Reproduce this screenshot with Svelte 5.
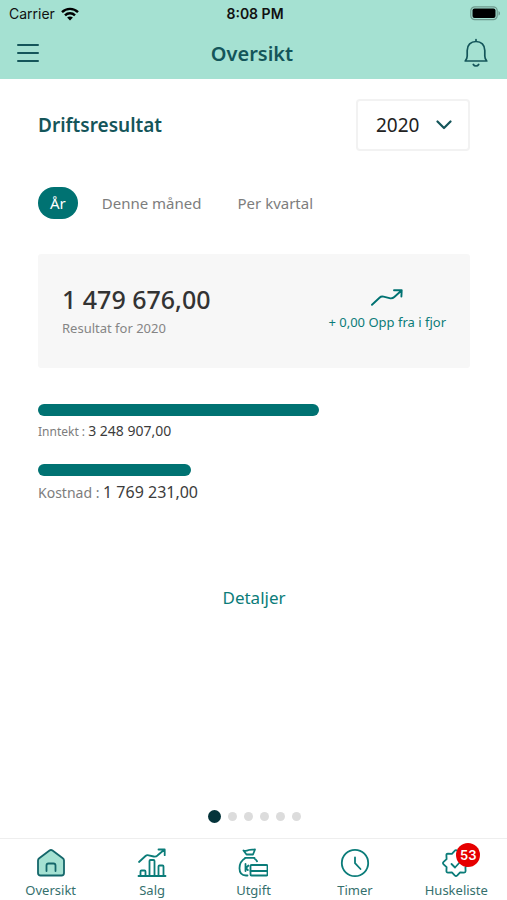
<script>
  let year = $state('2020');
  let period = $state('År');
  let page = $state(0);

  const periods = ['År', 'Denne måned', 'Per kvartal'];
  const bars = [
    { label: 'Inntekt', value: '3 248 907,00', share: 65, size: 'small' },
    { label: 'Kostnad', value: '1 769 231,00', share: 35.4, size: 'large' }
  ];
  const tabs = ['Oversikt', 'Salg', 'Utgift', 'Timer', 'Huskeliste'];
</script>

<div class="app">
  <header>
    <div class="status">
      <span class="carrier">
        Carrier
        <svg width="18" height="14" viewBox="0 0 18 14" aria-hidden="true">
          <g fill="none" stroke="#000" stroke-width="2.4">
            <path d="M1 5.2C5.5.7 12.500.7 17 5.200" />
            <path d="M4 8.300C6.800 5.500 11.200 5.500 14 8.300" />
          </g>
          <path d="M9 13.400 6.100 10.500C7.700 9 10.300 9 11.900 10.500Z" />
        </svg>
      </span>
      <span class="clock">8:08 PM</span>
      <svg class="battery" width="31" height="15" viewBox="0 0 31 15" aria-hidden="true">
        <rect x=".8" y=".8" width="26.400" height="12.900" rx="4" fill="none" stroke="#6d998d" stroke-width="1.200" />
        <rect x="2.500" y="2.600" width="23" height="9.300" rx="2" />
        <path d="M28.500 5v4.600c2-.8 2-3.800 0-4.600z" fill="#6d998d" />
      </svg>
    </div>
    <div class="bar">
      <button aria-label="Meny">
        <svg width="24" height="24" viewBox="0 0 24 24" fill="none" stroke="#14555a" stroke-width="2" stroke-linecap="round">
          <path d="M2 4h20M2 12h20M2 20h20" />
        </svg>
      </button>
      <h1>Oversikt</h1>
      <button aria-label="Varsler">
        <svg width="24" height="30" viewBox="0 0 24 30" fill="none" stroke="#14555a" stroke-width="1.700" stroke-linecap="round" stroke-linejoin="round">
          <path d="M12 1.500v2M1.200 23h21.600c-1.700-1.600-2-3-2-5V12.500C20.800 7 17.200 3.500 12 3.500S3.200 7 3.200 12.500V18c0 2-.3 3.400-2 5z" />
          <path d="M9.300 26.500c1.200 2 4.200 2 5.400 0" />
        </svg>
      </button>
    </div>
  </header>

  <main>
    <div class="heading">
      <h2>Driftsresultat</h2>
      <label class="year">
        <select bind:value={year} aria-label="År">
          <option>2020</option>
          <option>2019</option>
        </select>
        <svg width="16" height="10" viewBox="0 0 16 10" fill="none" stroke="#14555a" stroke-width="2.200" stroke-linecap="round" stroke-linejoin="round" aria-hidden="true">
          <path d="M1.500 1.500 8 8l6.500-6.500" />
        </svg>
      </label>
    </div>

    <div class="periods">
      {#each periods as name}
        <button class:active={period === name} aria-pressed={period === name} onclick={() => (period = name)}>{name}</button>
      {/each}
    </div>

    <section class="card">
      <div>
        <p class="total">1 479 676,00</p>
        <p class="note">Resultat for 2020</p>
      </div>
      <div class="trend">
        <svg width="32" height="17" viewBox="0 0 32 17" fill="none" stroke="#007272" stroke-width="1.900" stroke-linecap="round" stroke-linejoin="round" aria-hidden="true">
          <path d="M1 15.800 8.500 8.700c1.300-1.200 2.500-1.400 4-1l6 1.500c2 .5 3.500 0 4.800-1.200L30.500 1.500M23 1.200l7.700.1-.3 6.200" />
        </svg>
        <p>+ 0,00 Opp fra i fjor</p>
      </div>
    </section>

    <section class="bars">
      {#each bars as bar}
        <div>
          <div class="fill" style:width="{bar.share}%"></div>
          <p class={bar.size}>{bar.label} : <b>{bar.value}</b></p>
        </div>
      {/each}
    </section>

    <a class="details" href="#detaljer">Detaljer</a>

    <div class="dots">
      {#each Array(6) as _, i}
        <button class:current={page === i} aria-label="Side {i + 1}" onclick={() => (page = i)}></button>
      {/each}
    </div>
  </main>

  <nav>
    {#each tabs as tab}
      <a href="#{tab.toLowerCase()}">
        <span class="icon">
          <svg width="30" height="30" viewBox="0 0 30 30" fill="none" stroke="#0b7c79" stroke-width="1.800" stroke-linecap="round" stroke-linejoin="round" aria-hidden="true">
            {#if tab === 'Oversikt'}
              <path fill="#a5e1d2" stroke="#14666a" d="M2 12.500c0-1 .4-1.700 1.200-2.300L13.500 2.500c1-.7 2-.7 3 0l10.300 7.700c.8.6 1.200 1.300 1.200 2.300V25c0 1.600-.9 2.500-2.500 2.500h-21C2.900 27.500 2 26.600 2 25z" />
              <path stroke="#14666a" d="M10.500 23v-5.500c0-1.200.8-2 2-2h5c1.200 0 2 .8 2 2V23" />
            {:else if tab === 'Salg'}
              <path d="M1.500 28h27M3.500 28v-4.500q0-1 1-1h3q1 0 1 1V28M12.500 28V13q0-1 1-1h3q1 0 1 1v15M21.500 28v-9.500q0-1 1-1h3q1 0 1 1V28" />
              <path d="M2 14l6.500-6c1-.9 2-1 3.200-.7l5 1.200c1.700.4 2.800 0 4-1.200L27.500 1.500M21.500 1.500h6.200v5.700" />
            {:else if tab === 'Utgift'}
              <path d="M5.500 2.500c2.200.8 3.800.2 5.300-.5 1.800-.8 3.800-.3 6.200-.5L15 6.500H8.500zM7 9.800h9.500M7.500 10C3.300 12.300 1.500 16.500 1.500 20.300c0 4.700 2.500 7.200 6.500 7.200h1.500M16 10c1.300.9 2.300 2 3 3.300M7.500 16v7M10.500 17.500l-2.700 2.500 2 2" />
              <rect x="12.500" y="17" width="17" height="10.500" rx="1" />
              <path d="M12.500 23h17" />
            {:else if tab === 'Timer'}
              <circle cx="15" cy="15" r="13.200" />
              <path d="M15 9.500v5.700l5.500 5.800" />
            {:else}
              <path d="M15 2.100q.8 0 1.300.7l2.800 3 4-.2q1.500 0 1.500 1.500l-.2 4 3 2.800q1.300 1.200 0 2.400l-3 2.800.2 4q0 1.500-1.500 1.500l-4-.2-2.800 3q-1.300 1.300-2.600 0l-2.800-3-4 .2q-1.500 0-1.500-1.500l.2-4-3-2.800q-1.300-1.200 0-2.400l3-2.800-.2-4q0-1.500 1.500-1.500l4 .2 2.800-3q.5-.7 1.300-.7z" />
              <path d="M10.500 16l3.500 3.500 5.500-6" />
            {/if}
          </svg>
          {#if tab === 'Huskeliste'}<span class="badge">53</span>{/if}
        </span>
        {tab}
      </a>
    {/each}
  </nav>
</div>

<style>
  :global(body) {
    background: #fff;
  }
  .app {
    display: flex;
    flex-direction: column;
    min-height: 100vh;
    font-family: "Noto Sans", sans-serif;
    color: #333;
  }
  h1, h2, p {
    margin: 0;
  }
  button {
    padding: 0;
    border: 0;
    background: none;
    font: inherit;
    color: inherit;
    cursor: pointer;
  }
  a {
    text-decoration: none;
  }
  svg {
    display: block;
    flex: none;
  }
  header {
    background: #a5e1d2;
  }
  .status {
    display: grid;
    grid-template-columns: 1fr auto 1fr;
    align-items: center;
    height: 27px;
    padding: 0 6px 0 9px;
    font: 14px/27px Inter, sans-serif;
    color: #111;
  }
  .carrier {
    display: flex;
    align-items: center;
    gap: 6px;
  }
  .clock {
    font-weight: 600;
  }
  .battery {
    justify-self: end;
  }
  .bar {
    display: flex;
    align-items: center;
    justify-content: space-between;
    height: 52px;
    padding: 0 19px 0 16px;
    color: #14555a;
  }
  h1 {
    font-size: 20px;
    font-weight: 600;
  }
  main {
    flex: 1;
    display: flex;
    flex-direction: column;
    padding: 20px 37px 15px 38px;
  }
  .heading {
    display: flex;
    align-items: center;
    justify-content: space-between;
  }
  h2 {
    font-size: 19px;
    font-weight: 600;
    color: #14555a;
  }
  .year {
    display: grid;
    align-items: center;
    width: 114px;
  }
  .year > * {
    grid-area: 1 / 1;
  }
  .year svg {
    justify-self: end;
    margin-right: 18px;
    pointer-events: none;
  }
  select {
    appearance: none;
    height: 52px;
    padding: 0 18px;
    border: 2px solid #f2f2f2;
    border-radius: 4px;
    background: #fff;
    font: 19px "Noto Sans", sans-serif;
    color: #222;
  }
  .periods {
    display: flex;
    gap: 12px;
    margin-top: 36px;
  }
  .periods button {
    height: 32px;
    padding: 0 12px;
    border-radius: 16px;
    font-size: 15px;
    color: #7d7d7d;
  }
  .periods .active {
    background: #007272;
    color: #fff;
  }
  .card {
    display: flex;
    align-items: center;
    justify-content: space-between;
    height: 114px;
    margin-top: 35px;
    padding: 0 24px;
    border-radius: 3px;
    background: #f7f7f7;
  }
  .total {
    font-size: 25px;
    line-height: 34px;
    font-weight: 500;
  }
  .note {
    font-size: 13px;
    line-height: 24px;
    color: #858585;
  }
  .trend {
    display: flex;
    flex-direction: column;
    align-items: center;
    gap: 4px;
    font-size: 13px;
    line-height: 24px;
    color: #0b7c79;
  }
  .bars {
    display: grid;
    gap: 20px;
    margin-top: 36px;
  }
  .fill {
    height: 12px;
    border-radius: 6px;
    background: #007272;
  }
  .bars p {
    padding-top: 3px;
    color: #7d7d7d;
  }
  .bars b {
    font-weight: 400;
    color: #3c3c3c;
  }
  .small {
    font-size: 12px;
    line-height: 24px;
  }
  .small b {
    font-size: 14px;
  }
  .large {
    font-size: 14px;
    line-height: 26px;
  }
  .large b {
    font-size: 16px;
  }
  .details {
    align-self: center;
    margin-top: 80px;
    font-size: 17px;
    line-height: 24px;
    color: #0b7c79;
  }
  .dots {
    display: flex;
    align-items: center;
    justify-content: center;
    gap: 7px;
    margin-top: auto;
  }
  .dots button {
    width: 9px;
    height: 9px;
    border-radius: 50%;
    background: #dcdcdc;
  }
  .dots .current {
    width: 13px;
    height: 13px;
    background: #04333a;
  }
  nav {
    display: grid;
    grid-template-columns: repeat(5, 1fr);
    height: 61px;
    border-top: 1px solid #eee;
  }
  nav a {
    display: flex;
    flex-direction: column;
    align-items: center;
    gap: 2px;
    padding-top: 9px;
    font-size: 13px;
    line-height: 20px;
    color: #35706d;
  }
  .icon {
    position: relative;
  }
  .badge {
    position: absolute;
    top: -5px;
    left: 15px;
    width: 24px;
    border-radius: 12px;
    background: #e60000;
    font: 600 13px/24px Inter, sans-serif;
    text-align: center;
    color: #fff;
  }
</style>
